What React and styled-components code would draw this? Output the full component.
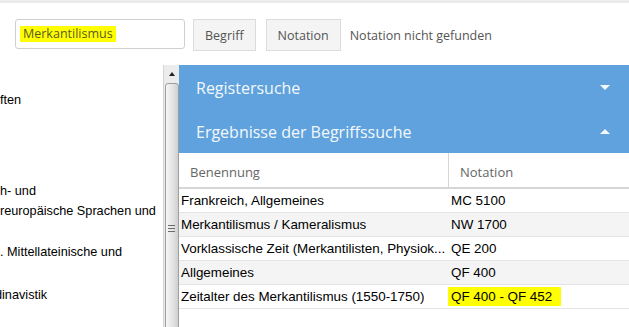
import React from "react";
import styled, { createGlobalStyle } from "styled-components";

const Global = createGlobalStyle`
  html, body { margin: 0; padding: 0; background: #fff; overflow: hidden; }
  body { width: 629px; height: 327px; }
  * { box-sizing: border-box; }
`;

const Page = styled.div`
  width: 629px;
  height: 327px;
  display: flex;
  flex-direction: column;
  overflow: hidden;
`;

const TopStrip = styled.div`
  height: 3px;
  background: #ebebeb;
  flex: none;
`;

const Toolbar = styled.div`
  height: 62px;
  flex: none;
  display: flex;
  align-items: flex-start;
  padding: 16px 0 0 15px;
  font-family: "Open Sans", sans-serif;
  font-size: 12.5px;
  color: #555;
`;

const SearchInput = styled.div`
  width: 170px;
  height: 30px;
  border: 1px solid #cfcfcf;
  border-radius: 3px;
  padding: 6px 0 0 4px;
  line-height: 16px;
  background: #fff;
`;

const Mark = styled.span`
  display: inline-block;
  background: #ffff00;
  color: ${(p) => p.$color || "#555"};
  padding: ${(p) => p.$pad || "0 3px"};
  line-height: ${(p) => p.$lh || "16px"};
`;

const Button = styled.div`
  margin-left: ${(p) => p.$gap}px;
  height: 32px;
  padding: 0 11px;
  background: #f4f4f4;
  border: 1px solid #dcdcdc;
  display: flex;
  align-items: center;
  color: #555;
`;

const Status = styled.div`
  margin-left: 9px;
  height: 32px;
  display: flex;
  align-items: center;
  color: #555;
`;

const Main = styled.div`
  flex: 1;
  display: flex;
  min-height: 0;
`;

const LeftPanel = styled.div`
  width: 163px;
  flex: none;
  overflow: hidden;
  font-family: "Liberation Sans", Arial, sans-serif;
  font-size: 12.7px;
  color: #000;
`;

const LeftLine = styled.div`
  white-space: nowrap;
  height: 20px;
  line-height: 20px;
  margin-top: ${(p) => p.$top}px;
  margin-left: ${(p) => p.$shift || 0}px;
`;

const Scrollbar = styled.div`
  width: 16px;
  flex: none;
  background: #ececec;
  border-left: 1px solid #d4d4d4;
  display: flex;
  flex-direction: column;
  align-items: center;
`;

const ArrowUp = styled.div`
  margin-top: 7px;
  width: 0;
  height: 0;
  border-left: 3px solid transparent;
  border-right: 3px solid transparent;
  border-bottom: 4px solid #222;
`;

const Thumb = styled.div`
  margin-top: 7px;
  width: 14px;
  flex: 1;
  margin-bottom: -10px;
  border: 1px solid #9e9e9e;
  border-radius: 3px;
  background: linear-gradient(to right, #f6f6f6, #e2e2e2 60%, #cfcfcf);
  display: flex;
  flex-direction: column;
  align-items: center;
  padding-top: 141px;
`;

const Grip = styled.div`
  width: 7px;
  height: 1px;
  background: #6c6c6c;
  margin-bottom: 2px;
`;

const RightPanel = styled.div`
  flex: 1;
  display: flex;
  flex-direction: column;
  min-width: 0;
`;

const AccordionHeader = styled.div`
  height: ${(p) => p.$h}px;
  background: #5fa2dd;
  color: #f4f8fc;
  font-family: "Open Sans", sans-serif;
  font-size: 16px;
  display: flex;
  align-items: center;
  justify-content: space-between;
  padding: 0 19px 0 17px;
`;

const Caret = styled.div`
  width: 0;
  height: 0;
  border-left: 5px solid transparent;
  border-right: 5px solid transparent;
  ${(p) =>
    p.$up
      ? "border-bottom: 5px solid #f4f8fc;"
      : "border-top: 5px solid #f4f8fc;"}
`;

const Table = styled.div`
  display: grid;
  grid-template-columns: 269px 1fr;
`;

const HeadCell = styled.div`
  height: 36px;
  display: flex;
  align-items: center;
  padding: 3px 0 0 ${(p) => p.$pad}px;
  font-family: "Open Sans", sans-serif;
  font-size: 13px;
  color: #666;
  border-bottom: 2px solid #d6d6d6;
  border-left: ${(p) => (p.$divider ? "1px solid #d6d6d6" : "none")};
`;

const Cell = styled.div`
  height: 24px;
  display: flex;
  align-items: center;
  padding-left: ${(p) => p.$pad}px;
  font-family: "Liberation Sans", Arial, sans-serif;
  font-size: 13.4px;
  color: #000;
  white-space: nowrap;
  overflow: hidden;
  background: ${(p) => (p.$alt ? "#f4f4f4" : "#fff")};
  border-bottom: 1px solid #e4e4e4;
`;

const rows = [
  ["Frankreich, Allgemeines", "MC 5100"],
  ["Merkantilismus / Kameralismus", "NW 1700"],
  ["Vorklassische Zeit (Merkantilisten, Physiok...", "QE 200"],
  ["Allgemeines", "QF 400"],
  ["Zeitalter des Merkantilismus (1550-1750)", "QF 400 - QF 452", true],
];

export default function App() {
  return (
    <Page>
      <Global />
      <TopStrip />
      <Toolbar>
        <SearchInput>
          <Mark $color="#5a5a22">Merkantilismus</Mark>
        </SearchInput>
        <Button $gap={8}>Begriff</Button>
        <Button $gap={10}>Notation</Button>
        <Status>Notation nicht gefunden</Status>
      </Toolbar>
      <Main>
        <LeftPanel>
          <LeftLine $top={25}>ften</LeftLine>
          <LeftLine $top={71}>h- und</LeftLine>
          <LeftLine $top={0}>reuropäische Sprachen und</LeftLine>
          <LeftLine $top={21}>. Mittellateinische und</LeftLine>
          <LeftLine $top={23} $shift={-5}>dinavistik</LeftLine>
        </LeftPanel>
        <Scrollbar>
          <ArrowUp />
          <Thumb>
            <Grip />
            <Grip />
            <Grip />
          </Thumb>
        </Scrollbar>
        <RightPanel>
          <AccordionHeader $h={45}>
            Registersuche
            <Caret />
          </AccordionHeader>
          <AccordionHeader $h={43}>
            Ergebnisse der Begriffssuche
            <Caret $up />
          </AccordionHeader>
          <Table>
            <HeadCell $pad={11}>Benennung</HeadCell>
            <HeadCell $pad={11} $divider>Notation</HeadCell>
            {rows.map(([name, notation, hl], i) => (
              <React.Fragment key={i}>
                <Cell $pad={2} $alt={i % 2 === 1}>{name}</Cell>
                <Cell $pad={hl ? 0 : 3} $alt={i % 2 === 1}>
                  {hl ? (
                    <Mark $color="#000" $pad="0 9px 0 3px" $lh="19px">
                      {notation}
                    </Mark>
                  ) : (
                    notation
                  )}
                </Cell>
              </React.Fragment>
            ))}
          </Table>
        </RightPanel>
      </Main>
    </Page>
  );
}
